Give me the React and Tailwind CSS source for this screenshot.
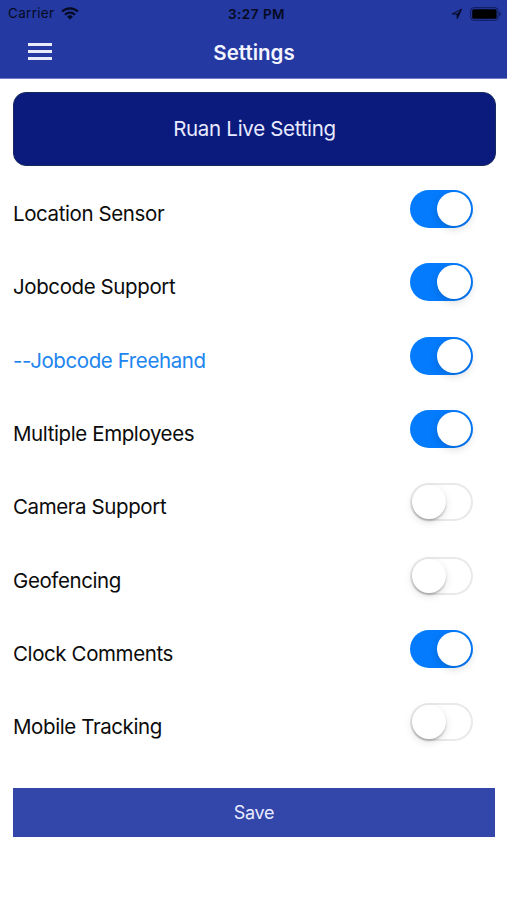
import React, { useState } from "react";

const initialSettings = [
  { name: "Location Sensor", enabled: true },
  { name: "Jobcode Support", enabled: true },
  { name: "--Jobcode Freehand", enabled: true, sub: true },
  { name: "Multiple Employees", enabled: true },
  { name: "Camera Support", enabled: false },
  { name: "Geofencing", enabled: false },
  { name: "Clock Comments", enabled: true },
  { name: "Mobile Tracking", enabled: false },
];

const WifiIcon = () => (
  <svg width="18" height="13" viewBox="0 0 18 13" fill="none" stroke="#060a22" strokeWidth="2.1">
    <path d="M1.1 4.6a11.2 11.2 0 0 1 15.8 0" />
    <path d="M4 7.7a7.1 7.1 0 0 1 10 0" />
    <path d="M9 12.6 6.1 9.8a4.1 4.1 0 0 1 5.8 0Z" fill="#060a22" stroke="none" />
  </svg>
);

const LocationIcon = () => (
  <svg width="12" height="12" viewBox="0 0 12 12" fill="none" stroke="#060a22" strokeWidth="1">
    <path d="M1.2 6 10.6 1.2 6.3 10.6 6 6Z" />
    <path d="M6 6 10.6 1.2 6.3 10.6Z" fill="#060a22" stroke="none" />
  </svg>
);

const BatteryIcon = () => (
  <svg width="32" height="14" viewBox="0 0 32 14">
    <rect x="0.7" y="0.7" width="27.4" height="12.6" rx="3" fill="none" stroke="#101b58" strokeWidth="1" />
    <rect x="2.2" y="2.2" width="24.4" height="9.6" rx="1.6" fill="#000" />
    <path d="M29.4 4.8c2 .8 2 3.6 0 4.4Z" fill="#101b58" />
  </svg>
);

const Toggle = ({ label, checked, onChange }) => (
  <button
    type="button"
    role="switch"
    aria-label={label}
    aria-checked={checked}
    onClick={onChange}
    className={`flex h-[38px] w-[63px] items-center rounded-full px-[2px] ${
      checked ? "justify-end bg-[#047bfd]" : "justify-start bg-white shadow-[inset_0_0_0_2px_#e9e9e9]"
    }`}
  >
    <span
      className={`size-[34px] rounded-full bg-white ${
        checked ? "shadow-[0_3px_8px_rgba(0,0,0,0.16)]" : "shadow-[0_2px_2px_rgba(0,0,0,0.2),0_3px_9px_rgba(0,0,0,0.12)]"
      }`}
    />
  </button>
);

const App = () => {
  const [settings, setSettings] = useState(initialSettings);

  const handleToggle = (name) => {
    setSettings(settings.map((s) => (s.name === name ? { ...s, enabled: !s.enabled } : s)));
  };

  return (
    <div className="min-h-screen bg-white font-[Inter,sans-serif] text-black">
      <header className="h-[79px] border-b border-[#6f7bc5] bg-[#2439a1]">
        <div className="grid h-[27px] grid-cols-[1fr_auto_1fr] items-center pr-[5px] pl-2 text-[13.5px] text-[#060a22]">
          <div className="flex items-center gap-[7px]">
            <span className="tracking-[0.3px]">Carrier</span>
            <WifiIcon />
          </div>
          <span className="pt-px pl-[3px] text-center font-semibold tracking-[0.5px]">3:27 PM</span>
          <div className="flex items-center justify-end gap-[7px]">
            <LocationIcon />
            <BatteryIcon />
          </div>
        </div>
        <div className="grid h-[50px] grid-cols-3 items-center">
          <button type="button" aria-label="Menu" className="mb-px ml-[28px] flex w-[24px] flex-col gap-[4px]">
            <span className="h-[3px] bg-[#e9ebfa]" />
            <span className="h-[3px] bg-[#e9ebfa]" />
            <span className="h-[3px] bg-[#e9ebfa]" />
          </button>
          <h1 className="pt-[3px] pl-px text-center text-[20.5px] font-semibold text-[#f3f4ff]">Settings</h1>
        </div>
      </header>

      <main className="flex flex-col pr-[11px] pl-[13px] pt-[12.5px]">
        <button
          type="button"
          className="h-[74px] rounded-[13px] border border-[#18295f] bg-[#0a1b7d] pt-[2px] text-[20.5px] tracking-[-0.3px] text-[#e8eaff]"
        >
          Ruan Live Setting
        </button>

        <ul className="mt-[7px]">
          {settings.map((s) => (
            <li key={s.name} className="flex h-[73.3px] items-center justify-between pr-[23px]">
              <span
                className={`pt-[10.5px] text-[20.5px] tracking-[-0.4px] ${s.sub ? "text-[#2185f0]" : "text-[#0c0c0c]"}`}
              >
                {s.name}
              </span>
              <Toggle label={s.name} checked={s.enabled} onChange={() => handleToggle(s.name)} />
            </li>
          ))}
        </ul>

        <button
          type="button"
          className="mt-[29px] mr-[1px] h-[49px] bg-[#3346aa] pt-px text-[18px] tracking-[-0.3px] text-[#e8eaff]"
        >
          Save
        </button>
      </main>
    </div>
  );
};

export default App;
